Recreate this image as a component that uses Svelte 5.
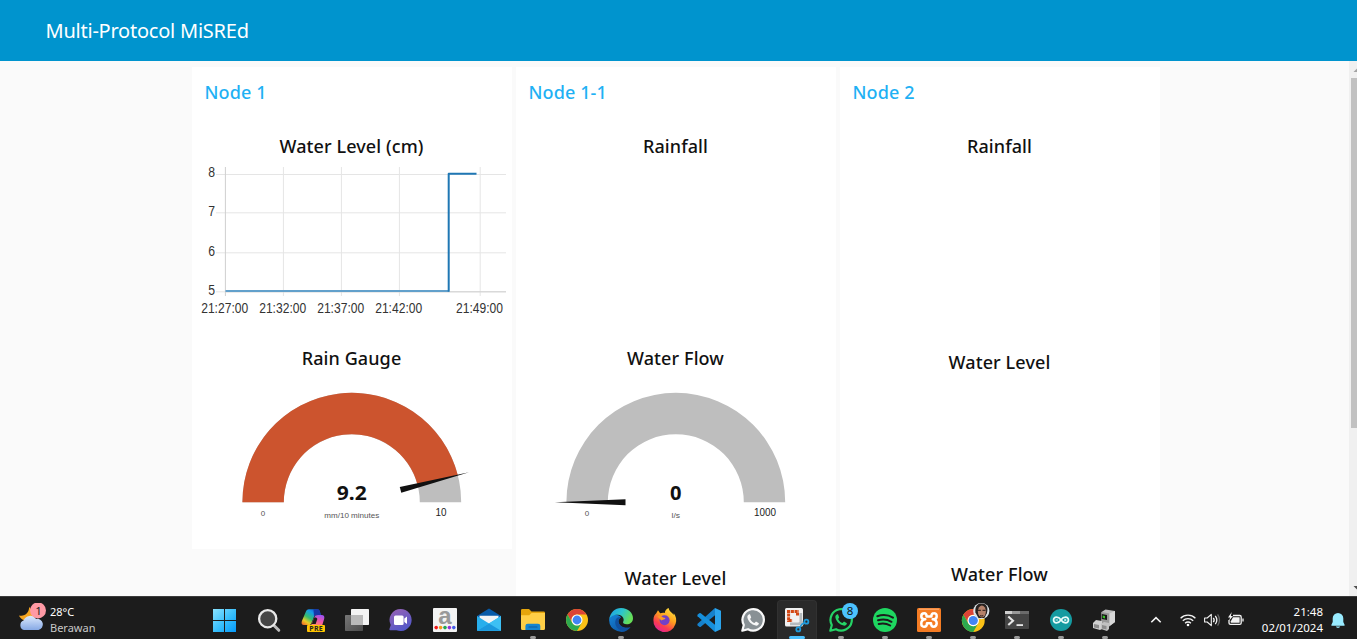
<script>
  const groups = [
    { name: 'Node 1', widgets: [
      { kind: 'chart', title: 'Water Level (cm)', h: 212 },
      { kind: 'gauge', title: 'Rain Gauge', h: 205, value: 9.2, min: 0, max: 10, unit: 'mm/10 minutes', maxW: 11, unitW: 55, valueW: 30 }
    ] },
    { name: 'Node 1-1', widgets: [
      { kind: 'empty', title: 'Rainfall', h: 212 },
      { kind: 'gauge', title: 'Water Flow', h: 220, value: 0, min: 0, max: 1000, unit: 'l/s', maxW: 22, unitW: 8.5, valueW: 11.5 },
      { kind: 'empty', title: 'Water Level', h: 60 }
    ] },
    { name: 'Node 2', widgets: [
      { kind: 'empty', title: 'Rainfall', h: 216 },
      { kind: 'empty', title: 'Water Level', h: 212 },
      { kind: 'empty', title: 'Water Flow', h: 60 }
    ] }
  ];

  const yTicks = [[8, 174.5, 177.2], [7, 212.8, 215.8], [6, 252.8, 255.8], [5, 291.8, 294.8]];
  const xTicks = [['21:27:00', 225.4], ['21:32:00', 283.4], ['21:37:00', 341.4], ['21:42:00', 399.4], ['21:49:00', 480.2]];

  const apps = [
    { id: 'start' }, { id: 'search' }, { id: 'copilot' }, { id: 'taskview' }, { id: 'chat' },
    { id: 'store' }, { id: 'mail' }, { id: 'files', run: true }, { id: 'chrome' }, { id: 'edge', run: true },
    { id: 'firefox' }, { id: 'code' }, { id: 'wagray' }, { id: 'snip', active: true }, { id: 'wagreen', run: true },
    { id: 'spotify', run: true }, { id: 'xampp', run: true }, { id: 'profile', run: true },
    { id: 'terminal', run: true }, { id: 'arduino', run: true }, { id: 'device', run: true }
  ];

  const cx = 159.8, cy = 502.2, R = 109.4, r = 68;
  function arc(from, to) {
    const p = (t, rad) => {
      const a = Math.PI * (1 - t);
      return `${cx + rad * Math.cos(a)} ${cy - rad * Math.sin(a)}`;
    };
    return `M${p(from, R)}A${R} ${R} 0 0 1 ${p(to, R)}L${p(to, r)}A${r} ${r} 0 0 0 ${p(from, r)}Z`;
  }
</script>

{#snippet gauge(w)}
  <svg class="plot" width="320" height="177" viewBox="0 372 320 177">
    <path d={arc(0, 1)} fill="#bebebe" />
    {#if w.value > 0}<path d={arc(0, w.value / w.max)} fill="#cc542e" />{/if}
    <path d="M-121 0L-50.3 -3V3Z" fill="#111" transform="translate({cx} {cy + 0.1}) rotate({(w.value / w.max) * 180})" />
    <text class="value" x={cx} y="499.8" textLength={w.valueW} lengthAdjust="spacingAndGlyphs">{w.value}</text>
    <text class="unit" x={cx} y="517.9" textLength={w.unitW} lengthAdjust="spacingAndGlyphs">{w.unit}</text>
    <text class="unit" x="71" y="516">{w.min}</text>
    <text class="max" x="249" y="516" textLength={w.maxW} lengthAdjust="spacingAndGlyphs">{w.max}</text>
  </svg>
{/snippet}

{#snippet chart()}
  <svg class="plot" width="320" height="184" viewBox="192 160 320 184">
    {#each yTicks as [label, y, base]}
      <path d="M216 {y}H506" stroke="#e5e5e5" />
      <text class="tick end" x="215" y={base} textLength="6.8" lengthAdjust="spacingAndGlyphs">{label}</text>
    {/each}
    {#each xTicks as [label, x], i}
      <path d="M{x} 167V296" stroke={i ? '#e5e5e5' : '#cfcfcf'} />
      <text class="tick" x={x - 0.7} y="313.2" textLength="47" lengthAdjust="spacingAndGlyphs">{label}</text>
    {/each}
    <path d="M225.5 291.8H506" stroke="#d0d0d0" />
    <path d="M225.5 291H448.7" stroke="#62a0cb" stroke-width="2" />
    <path d="M448.7 291.7V173.8H476.5" fill="none" stroke="#1f77b4" stroke-width="2" stroke-linejoin="round" />
  </svg>
{/snippet}

{#snippet chromeMark()}
  <circle cx="12" cy="12" r="11" fill="#fbc116" />
  <path d="M2.5 6.5A11 11 0 0 1 21.5 6.5H12A5.5 5.5 0 0 0 7.2 14.7Z" fill="#dc4437" />
  <path d="M2.5 6.5A11 11 0 0 0 12 23L16.8 14.7A5.5 5.5 0 0 1 7.2 14.7Z" fill="#2da94f" />
  <circle cx="12" cy="12" r="5.5" fill="#fff" />
  <circle cx="12" cy="12" r="4.4" fill="#4285f4" />
{/snippet}

{#snippet phone(stroke, fill)}
  <path d="M1.3 22.7L2.8 17A10.7 10.7 0 1 1 7 21.2Z" {fill} {stroke} stroke-width="2.2" stroke-linejoin="round" />
  <path d="M8.3 6.2C7 6.7 6.1 8 6.4 9.6C7.2 13.5 10.5 16.7 14.6 17.6C16.4 17.9 17.8 16.7 17.9 15.2L15 13.6L13.5 15.1C11.5 14.4 10 12.9 9.1 11L10.2 9.5L9 6.3Z" fill={stroke} />
{/snippet}

{#snippet icon(id)}
  <svg class="icon" width="24" height="24" viewBox="0 0 24 24">
    {#if id === 'start'}
      <defs><linearGradient id="win" x2="1" y2="1"><stop stop-color="#8ae3ff" /><stop offset=".55" stop-color="#35bdfb" /><stop offset="1" stop-color="#0598f8" /></linearGradient></defs>
      <path d="M0 1H11V12H0ZM12 1H23V12H12ZM0 13H11V24H0ZM12 13H23V24H12Z" fill="url(#win)" />
    {:else if id === 'search'}
      <path d="M17 17.5L21.8 22.3" stroke="#bcbcbc" stroke-width="3" stroke-linecap="round" />
      <circle cx="10.7" cy="10.7" r="8.6" fill="#464646" stroke="#e9e9e9" stroke-width="2.3" />
    {:else if id === 'copilot'}
      <defs>
        <linearGradient id="cp1" x1=".9" x2=".1" y2="1"><stop stop-color="#1740c6" /><stop offset=".3" stop-color="#169bea" /><stop offset=".58" stop-color="#35bd6d" /><stop offset=".8" stop-color="#e9cd27" /><stop offset="1" stop-color="#f46b25" /></linearGradient>
        <linearGradient id="cp2" x1=".7" x2=".3" y2="1"><stop stop-color="#9c52f3" /><stop offset=".5" stop-color="#ed56a9" /><stop offset="1" stop-color="#ff945b" /></linearGradient>
      </defs>
      <path d="M8 1.3H16.5C18.2 1.3 18.8 3 19.3 5L19.7 7H15.8C13.5 7 13 8.5 12.5 10L10.4 15.3C9.8 16.7 9 17 7.5 17H3C.7 17 .2 15.5.8 13.3L4.5 4.5C5.3 2.5 6.3 1.3 8 1.3Z" fill="url(#cp1)" />
      <path d="M12.5 1.3H16.5C18.2 1.3 18.8 3 19.3 5L19.7 7H16C14.6 7 13.5 7.7 13 9Z" fill="#1738a8" />
      <path d="M17 7H20.5C23 7 23.8 8.7 23.2 10.7L21 18H9.8L13.2 9.7C14 7.7 15 7 17 7Z" fill="url(#cp2)" />
      <path d="M13.2 9.7L10.8 16H14.7L16.3 11C15.8 9.8 14.5 9.3 13.2 9.7Z" fill="#1c1c1c" />
      <rect x="6" y="17" width="18" height="7" rx="1" fill="#ffc400" />
      <text x="15" y="23" font-size="7" font-weight="700" fill="#222" text-anchor="middle" textLength="13.5">PRE</text>
    {:else if id === 'taskview'}
      <defs><linearGradient id="tv" x2="1" y2="1"><stop stop-color="#777" /><stop offset="1" stop-color="#4c4c4c" /></linearGradient></defs>
      <rect x="0" y="7" width="18" height="16" rx=".7" fill="url(#tv)" />
      <rect x="6" y="1" width="18" height="16" rx=".7" fill="#f4f4f4" />
      <path d="M6 7H18V17H6Z" fill="#bababa" />
    {:else if id === 'chat'}
      <defs><linearGradient id="ch" x1="0" x2=".5" y2="1"><stop stop-color="#9a62b4" /><stop offset="1" stop-color="#5558c8" /></linearGradient></defs>
      <path d="M11.7 1A11 11 0 1 1 7.5 22.2H1.2C.3 22.2.2 21.4.6 20.6L1.7 17A11 11 0 0 1 11.7 1Z" fill="url(#ch)" />
      <rect x="5" y="7.4" width="9.6" height="9.6" rx="1.5" fill="#fff" />
      <path d="M15.3 10.5L18 8.4V16L15.3 13.9Z" fill="#fff" />
    {:else if id === 'store'}
      <rect width="24" height="24" rx="1" fill="#f3f3f3" />
      <text x="12" y="15.5" font-size="24" class="letter" text-anchor="middle">a</text>
      {#each ['#f21818', '#f49a1c', '#20a653', '#9331d8', '#445ee8'] as c, i}<circle cx={3.2 + i * 4.4} cy="19.6" r="1.8" fill={c} />{/each}
    {:else if id === 'mail'}
      <path d="M0 8L12 .6L24 8V12H0Z" fill="#075aa8" />
      <path d="M2.5 7.8H21.5V14L12 20L2.5 14Z" fill="#f1f3f5" />
      <path d="M0 8L12 15.5L24 8V22.8H0Z" fill="#27aeec" />
      <path d="M24 8L0 22.8H24Z" fill="#3dc0f4" />
      <path d="M0 22.8L12 15.5L24 22.8Z" fill="#1b98de" />
    {:else if id === 'files'}
      <path d="M0 2.3Q0 1 1.3 1H8L10.5 3.4H22.7Q24 3.4 24 4.7V10H0Z" fill="#e5a50c" />
      <path d="M0 7.2H8.2L10.5 5.1H24V20.5Q24 22 22.5 22H1.5Q0 22 0 20.5Z" fill="#ffcf47" />
      <path d="M4.4 22V18Q4.4 15.7 6.7 15.7H17Q19.3 15.7 19.3 18V22Z" fill="#1685d0" />
      <path d="M8 19H16" stroke="#0f5d9f" stroke-width="1.2" stroke-linecap="round" />
    {:else if id === 'chrome'}
      {@render chromeMark()}
    {:else if id === 'edge'}
      <defs>
        <linearGradient id="ed1" x2="1" y2=".4"><stop stop-color="#1d9de7" /><stop offset=".55" stop-color="#2cc5cd" /><stop offset="1" stop-color="#66df58" /></linearGradient>
        <linearGradient id="ed2" x2="1" y2="1"><stop stop-color="#1684d8" /><stop offset="1" stop-color="#0b4c9a" /></linearGradient>
      </defs>
      <path d="M.1 12A12 12 0 0 0 21.5 19.2C15.5 21.3 10.5 18 9.7 14.5C9 11.8 11 10 12.2 9.5C9.4 5.2.8 5.7.1 12Z" fill="url(#ed2)" />
      <path d="M.1 11.6C1.3 4.2 6 0 12 0C19.5 0 24 5.2 24 10.2C24 14.2 20.8 16.2 17.8 16.2C15.1 16.2 13.6 15 14.1 14C15.6 12 14.5 7.2 9 6.8C5 6.6 1.3 8.6.1 11.6Z" fill="url(#ed1)" />
      <path d="M7.5 10.5C4.5 14.5 7 21.5 12.8 22.2C16 22.4 19 21.5 21.5 19.2C15.5 21.3 10 17.5 9.3 14C9 11.6 10.8 9.8 12.2 9.5C10.5 8.8 8.5 9.2 7.5 10.5Z" fill="#10509f" />
    {:else if id === 'firefox'}
      <defs>
        <linearGradient id="ff" x1=".8" x2=".2" y2="1"><stop stop-color="#ffe341" /><stop offset=".4" stop-color="#ffa11d" /><stop offset=".72" stop-color="#fb3c50" /><stop offset="1" stop-color="#dc20a3" /></linearGradient>
      </defs>
      <path d="M5 2.2L7.1 5.3C9 4.6 10.5 4.5 11.8 5C12 2.6 13.3.9 15.7 0C15.8 3.2 19.2 4.5 20.6 7L20.8 5.2C23.1 8.2 24 12.2 22.5 16A11.3 11.3 0 0 1 .4 12C.4 8.2 2.2 6.3 3.1 5.6Z" fill="url(#ff)" />
      <circle cx="11.6" cy="12.2" r="5" fill="#7240c7" />
      <path d="M4.3 8.6C7.5 7.1 9 8.4 10 9.6L12.4 10C12.4 11.6 9.5 11.4 8.3 12.6C7.5 11.6 6.3 10.4 4.3 8.6Z" fill="#ff9a24" />
    {:else if id === 'code'}
      <path d="M18 0L.6 15.8Q0 16.6.7 17.4L2.3 18.8Q3 19.3 3.8 18.7L18 7.2Z" fill="#1681cb" />
      <path d="M18 24L.6 8.2Q0 7.4.7 6.6L2.3 5.2Q3 4.7 3.8 5.3L18 16.8Z" fill="#168fdb" />
      <path d="M18 0L24 2.8V21.2L18 24Z" fill="#2ba4ec" />
    {:else if id === 'wagray'}
      {@render phone('#f8f8f8', '#899195')}
    {:else if id === 'snip'}
      <rect width="18" height="18.5" rx="1.5" fill="#f1f1f1" />
      <path d="M2 3.6H14M3.6 5.5V14M3.6 12.6H7.5M12.5 5V7.5" fill="none" stroke="#d34814" stroke-width="3" stroke-dasharray="3.1 .7" />
      <path d="M15.8 5V14.5L18 17M5 15.8H14L18 13.8" fill="none" stroke="#b5babd" stroke-width="2.7" />
      <circle cx="21.4" cy="13.7" r="2" fill="none" stroke="#1e9bdd" stroke-width="1.8" />
      <circle cx="13.3" cy="21.4" r="2" fill="none" stroke="#1e9bdd" stroke-width="1.8" />
      <path d="M19.6 14.8L16.8 16.4L14.5 19.6" stroke="#1e9bdd" stroke-width="1.6" fill="none" />
    {:else if id === 'wagreen'}
      {@render phone('#25d366', '#1c1c1c')}
    {:else if id === 'spotify'}
      <circle cx="12" cy="12" r="12" fill="#1ed760" />
      <path d="M4.3 8.2C9.3 6.6 15.5 7 20 9.6M5 12.3C9.6 11 14.7 11.6 18.5 13.8M5.7 16C9.7 15 13.8 15.5 17.2 17.5" fill="none" stroke="#1c1c1c" stroke-width="2" stroke-linecap="round" />
    {:else if id === 'xampp'}
      <rect width="24" height="24" rx="1.5" fill="#f57c24" />
      <path d="M2 1.2H22" stroke="#ffa96c" stroke-width="1.2" />
      <path d="M7.3 5.3Q4.3 5.3 4.3 8.2T7.3 11.2H8.3Q4.3 11.8 4.3 15.4T7.3 18.7Q10 18.7 10 15.2H14Q14 18.7 16.7 18.7T19.7 15.4Q19.7 11.8 15.7 11.2H16.7Q19.7 11.2 19.7 8.2T16.7 5.3Q14.4 5.3 14.4 8.6H9.6Q9.6 5.3 7.3 5.3Z" fill="#f57c24" stroke="#fff" stroke-width="2.5" stroke-linejoin="round" />
    {:else if id === 'profile'}
      <g transform="translate(-.2 0) scale(1.04)">{@render chromeMark()}</g>
      <circle cx="20.3" cy="3.1" r="8.1" fill="#dce3e7" />
      <path d="M14.4 4.5C13.5-3.5 18-4.7 21-4.6C25.8-4.4 27.5-.5 25.8 5.5L23.3 10H17.5Z" fill="#27211f" />
      <ellipse cx="20.9" cy="3.6" rx="4" ry="6" fill="#b58169" />
      <path d="M17 2.3H19.9M21.5 2.3H24.5M19 7.5Q20.7 8.5 22.3 7.5" stroke="#422e28" stroke-width="1.2" fill="none" />
    {:else if id === 'terminal'}
      <rect y="3" width="24" height="18" rx=".8" fill="#454545" />
      <path d="M0 3H7V6H0Z" fill="#cecece" /><path d="M7 3H15V6H7Z" fill="#999" /><path d="M15 3H24V6H15Z" fill="#6b6b6b" />
      <path d="M3.3 8.5L8 12.8L3.3 17" fill="none" stroke="#e7e7e7" stroke-width="2.1" /><path d="M11.5 17.1H18" stroke="#e7e7e7" stroke-width="1.8" />
    {:else if id === 'arduino'}
      <circle cx="12" cy="12" r="11" fill="#159ba1" />
      <path d="M12 12C9.5 8.3 4.6 8.2 4.6 12S9.5 15.7 12 12C14.5 8.3 19.4 8.2 19.4 12S14.5 15.7 12 12Z" fill="none" stroke="#e7fbfa" stroke-width="1.8" />
      <path d="M6.6 12H9M15 12H17.4M16.2 10.8V13.2" stroke="#e7fbfa" stroke-width=".9" />
    {:else if id === 'device'}
      <path d="M8.5 4L12.5 1.6L22 3V14L15.5 19L8.5 16Z" fill="#bdbdbd" />
      <path d="M8.5 4L16.5 5.5V18L8.5 16Z" fill="#999" /><path d="M16.5 5.5L22 3V14L16.5 18Z" fill="#d8d8d8" />
      <path d="M8.8 6L14 7V12L8.8 11Z" fill="#171717" /><path d="M9.7 7.4L12 8V10.4L9.7 9.8Z" fill="#36c427" />
      <path d="M0 15L3 12L9 13V21L7 22L0 20Z" fill="#d0d0d0" /><path d="M8 16L11 14L16 15V21L14 23L8 21Z" fill="#c2c2c2" />
      <path d="M1 16L6 17V20.5L1 19.5ZM9 17L13.5 18V21.5L9 20.5Z" fill="#8c8c8c" />
    {/if}
  </svg>
{/snippet}

<div class="screen">
  <header><h1>Multi-Protocol MiSREd</h1></header>

  <main>
    <div class="groups">
      {#each groups as g}
        <section class="group">
          <h2>{g.name}</h2>
          {#each g.widgets as w}
            <div class="widget" style:height="{w.h}px">
              <h3>{w.title}</h3>
              {#if w.kind === 'chart'}{@render chart()}{:else if w.kind === 'gauge'}{@render gauge(w)}{/if}
            </div>
          {/each}
        </section>
      {/each}
    </div>
    <div class="scrollbar">
      <svg width="8" height="17" viewBox="0 0 8 17"><path d="M4.5 11H8V7.5Z" fill="#a3a3a3" /></svg>
      <div class="thumb"></div>
      <svg width="8" height="17" viewBox="0 0 8 17"><path d="M4.5 7H8V10.5Z" fill="#505050" /></svg>
    </div>
  </main>

  <footer>
    <div class="weather">
      <svg width="30" height="32" viewBox="0 0 30 32">
        <defs><linearGradient id="cl" y2="1" x2="0"><stop stop-color="#dce9fd" /><stop offset="1" stop-color="#86a9e5" /></linearGradient></defs>
        <path d="M11 4C11.5 9 7 14 1 12.5C3 17 9 20 14 17L18 11Z" fill="#f6a51f" />
        <path d="M6 27A5 5 0 0 1 5.6 17.5A7 7 0 0 1 18 16A5.6 5.6 0 0 1 20.5 27Z" fill="url(#cl)" />
        <circle cx="20" cy="7.4" r="8" fill="#ff99a4" />
        <text x="20.6" y="11.5" font-size="11.5" fill="#222" text-anchor="middle">1</text>
      </svg>
      <p><span class="temp">28°C</span><span class="cond">Berawan</span></p>
    </div>
    <nav>
      {#each apps as a}
        <div class="app" class:active={a.active} class:run={a.run}>
          {@render icon(a.id)}
          {#if a.id === 'wagreen'}<span class="badge">8</span>{/if}
        </div>
      {/each}
    </nav>
    <div class="tray">
      <svg width="98" height="22" viewBox="1150 609 98 22" fill="none" stroke="#f4f4f4" stroke-width="1.3">
        <path d="M1151.3 622.3L1156 617.7L1160.7 622.3" stroke-width="1.6" />
        <path d="M1180.6 618.3A10.4 10.4 0 0 1 1195.4 618.3M1182.8 620.8A7.3 7.3 0 0 1 1193.2 620.8M1185.1 623.2A4.1 4.1 0 0 1 1190.9 623.2" />
        <circle cx="1188" cy="625" r="1.3" fill="#fff" stroke="none" />
        <path d="M1204.6 618H1207.2L1211.3 614.3V625.7L1207.2 622H1204.6Z" stroke-linejoin="round" stroke-width="1.1" />
        <path d="M1213.3 617.8Q1215 620 1213.3 622.2M1215.3 615.8Q1218.4 620 1215.3 624.2" />
        <path d="M1217.6 614.4Q1221.4 620 1217.6 625.6" stroke="#666" />
        <path d="M1233 615.5H1239.7Q1241.2 615.5 1241.2 617V623Q1241.2 624.4 1239.7 624.4H1230.5Q1229 624.4 1229 623V620M1243 618.5V621.5" />
        <path d="M1233 617.2H1239.6V622.8H1230.8V621.2Z" fill="#f4f4f4" stroke="none" />
        <path d="M1231.8 612L1228 617.4H1230.2L1228.8 621L1233 615.9H1230.8Z" fill="#f4f4f4" stroke="none" />
      </svg>
      <p class="clock"><span>21:48</span><span>02/01/2024</span></p>
      <svg width="14" height="16" viewBox="0 0 14 16"><path d="M7 0A5.3 5.3 0 0 1 12.3 5.3V9L13.7 12Q14 12.8 13 12.8H1Q0 12.8.3 12L1.7 9V5.3A5.3 5.3 0 0 1 7 0ZM4.8 13.6H9.2A2.3 2 0 0 1 4.8 13.6Z" fill="#99ebff" /></svg>
    </div>
  </footer>
</div>

<style>
  :global(body) { margin: 0; overflow: hidden; }
  * { box-sizing: border-box; }
  .screen { width: 1357px; height: 639px; display: flex; flex-direction: column; overflow: hidden; background: #fafafa; font-family: "Noto Sans", "Open Sans", sans-serif; color: #111; }
  h1, h2, h3, p { margin: 0; }
  header { height: 61px; flex: none; background: #0094ce; padding-left: 45.5px; display: flex; align-items: center; }
  h1 { font-size: 20px; font-weight: 400; color: #fff; white-space: nowrap; line-height: 60px; letter-spacing: -0.23px; }
  main { height: 535px; flex: none; display: flex; justify-content: space-between; overflow: hidden; }
  .groups { display: flex; gap: 4px; align-items: flex-start; padding: 6px 0 0 192px; }
  .group { width: 320px; background: #fff; }
  h2 { height: 65px; padding: 11px 0 0 12.5px; font-size: 18px; line-height: 28px; font-weight: 500; color: #1fb1f4; white-space: nowrap; letter-spacing: 0.1px; }
  h3 { height: 28px; line-height: 28px; font-size: 18px; font-weight: 500; text-align: center; white-space: nowrap; padding-right: 1px; letter-spacing: 0.1px; }
  .plot { display: block; }
  .plot text { text-anchor: middle; }
  .value { font-size: 20px; font-weight: 700; fill: #111; }
  .unit { font: 8px "Liberation Sans", sans-serif; fill: #555; }
  .max { font: 10px "Liberation Sans", sans-serif; fill: #222; }
  .tick { font: 14px "Liberation Sans", sans-serif; fill: #333; }
  .plot .end { text-anchor: end; }
  .scrollbar { width: 8px; height: 100%; background: #f0f0f0; display: flex; flex-direction: column; }
  .thumb { height: 350px; margin: 0 0 auto 2px; background: #c1c1c1; }
  footer { height: 43px; flex: none; background: #1c1c1c; border-top: 1px solid #3b3b3b; display: flex; color: #fff; }
  .weather { width: 203px; display: flex; padding: 6px 0 0 18px; }
  .weather p { display: flex; flex-direction: column; padding: 1px 0 0 2px; font-size: 11px; line-height: 16px; }
  .cond { color: #c8c8c8; }
  nav { display: flex; width: 924px; }
  .app { width: 44px; height: 42px; flex: none; display: flex; flex-direction: column; align-items: center; padding-top: 11px; position: relative; }
  .icon { overflow: visible; flex: none; }
  .letter { font-family: "Liberation Sans", sans-serif; font-weight: 700; fill: #999; }
  .run::after, .active::after { content: ""; width: 6px; height: 3px; margin-top: 4px; border-radius: 1.5px; background: #999; }
  .active { width: 40px; margin: 3px 2px 0; height: 39px; padding-top: 7px; background: #2a2a2a; border: 1px solid #313131; border-bottom: 0; border-radius: 4px 4px 0 0; }
  .active::after { width: 16px; background: #4cc2ff; }
  .badge { position: absolute; right: 5px; top: 6px; width: 16px; height: 16px; border-radius: 50%; background: #4cc2ff; color: #111; font-size: 11.5px; line-height: 16px; text-align: center; }
  .tray { display: flex; padding-left: 23px; }
  .tray > svg:first-child { margin-top: 12px; flex: none; }
  .tray > svg:last-child { margin: 16px 0 0 8px; flex: none; }
  .clock { width: 75px; display: flex; flex-direction: column; text-align: right; font-size: 11.5px; line-height: 16px; padding-top: 7px; }
</style>
